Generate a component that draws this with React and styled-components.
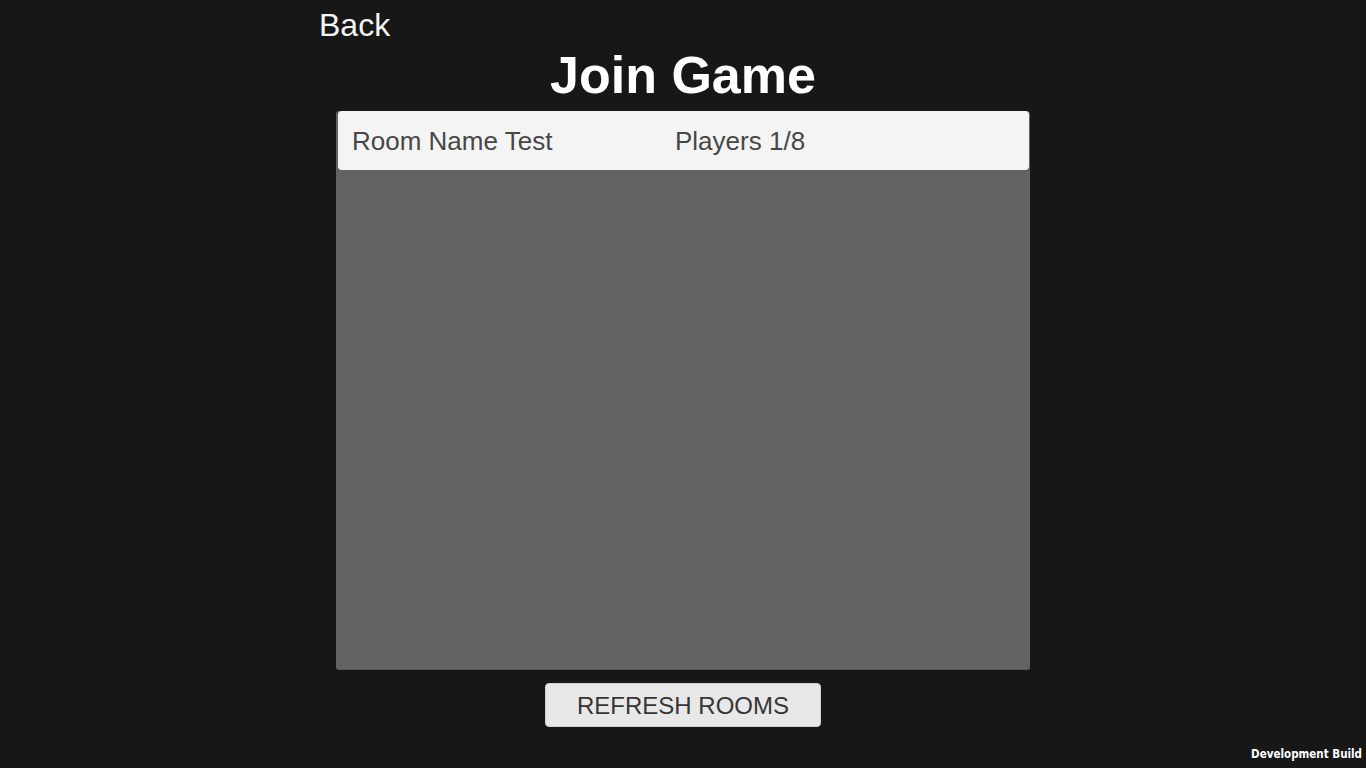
import styled, { createGlobalStyle } from "styled-components";

const rooms = [{ name: "Room Name Test", players: 1, max: 8 }];

export default function App() {
  return (
    <>
      <GlobalStyle />
      <Page>
        <Column>
          <BackLink>Back</BackLink>
          <Title>Join Game</Title>
          <RoomPanel>
            {rooms.map((room) => (
              <RoomRow key={room.name}>
                <RoomName>{room.name}</RoomName>
                <RoomPlayers>
                  Players {room.players}/{room.max}
                </RoomPlayers>
              </RoomRow>
            ))}
          </RoomPanel>
          <RefreshButton>REFRESH ROOMS</RefreshButton>
        </Column>
        <DevBuild>Development Build</DevBuild>
      </Page>
    </>
  );
}

const GlobalStyle = createGlobalStyle`
  html, body {
    margin: 0;
    padding: 0;
    background: #171717;
  }
  body {
    font-family: "Liberation Sans", Arial, sans-serif;
  }
`;

const Page = styled.div`
  width: 100%;
  height: 768px;
  display: flex;
  justify-content: center;
  background: #171717;
  position: relative;
  overflow: hidden;
`;

const Column = styled.div`
  width: 694px;
  display: flex;
  flex-direction: column;
  align-items: center;
  padding-top: 9px;
`;

const BackLink = styled.div`
  align-self: flex-start;
  margin-left: -17px;
  color: #f5f5f5;
  font-size: 32px;
  line-height: 32px;
  cursor: pointer;
`;

const Title = styled.h1`
  margin: 8px 0 0;
  color: #ffffff;
  font-size: 52px;
  font-weight: 700;
  line-height: 52px;
`;

const RoomPanel = styled.div`
  box-sizing: border-box;
  margin-top: 10px;
  width: 694px;
  height: 559px;
  padding: 0 1px 0 2px;
  background: #636363;
  border-bottom: 1px solid #575757;
  border-radius: 3px;
`;

const RoomRow = styled.div`
  box-sizing: border-box;
  height: 59px;
  display: grid;
  grid-template-columns: 323px 1fr;
  align-items: center;
  padding-left: 14px;
  background: #f4f4f4;
  border-radius: 4px;
  color: #474747;
  font-size: 26px;
  line-height: 26px;
`;

const RoomName = styled.span``;

const RoomPlayers = styled.span``;

const RefreshButton = styled.button`
  margin-top: 13px;
  width: 276px;
  height: 44px;
  padding: 2px 0 0;
  background: #e8e8e8;
  border: 1px solid #d0d0d0;
  border-radius: 4px;
  color: #363636;
  font-family: "Liberation Sans", Arial, sans-serif;
  font-size: 24px;
  line-height: 24px;
  cursor: pointer;
`;

const DevBuild = styled.div`
  position: absolute;
  right: 4px;
  bottom: 7px;
  color: #ffffff;
  font-family: "DejaVu Sans Condensed", "DejaVu Sans", sans-serif;
  font-weight: 700;
  font-size: 11.5px;
  line-height: 14px;
`;
